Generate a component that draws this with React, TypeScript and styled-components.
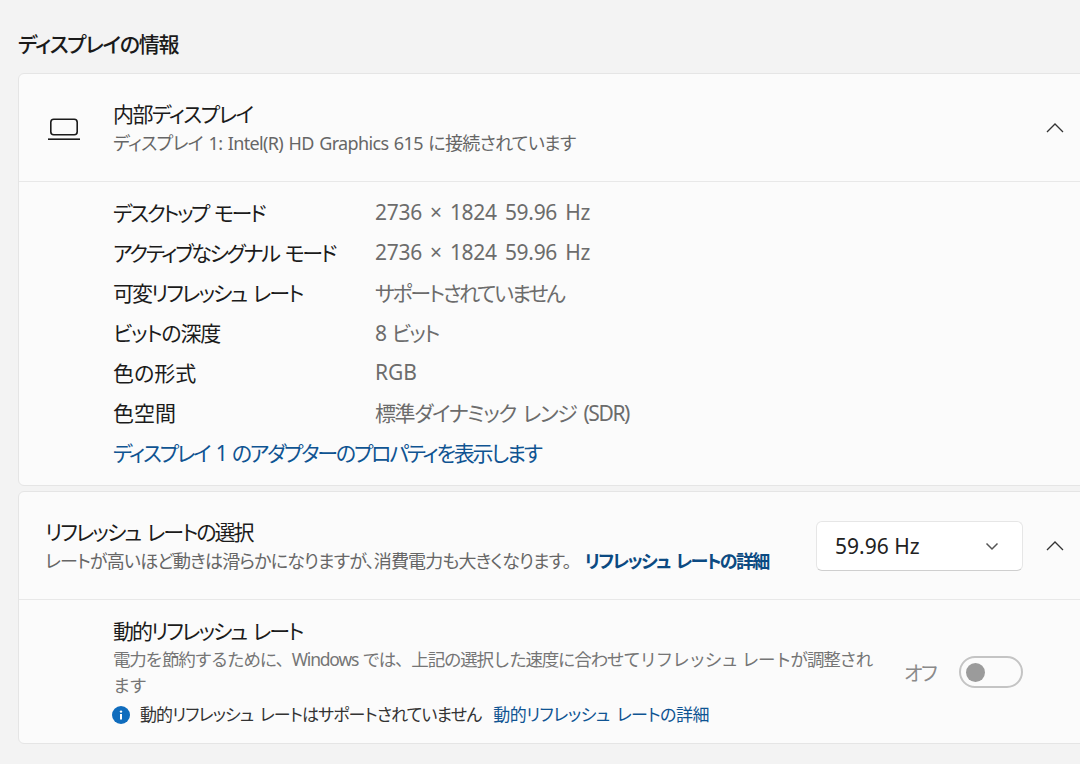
import React from "react";
import styled, { createGlobalStyle } from "styled-components";

const Global = createGlobalStyle`
  html, body { margin: 0; padding: 0; height: 764px; overflow: hidden; background: #f3f3f3; }
  body { font-family: "Noto Sans", "Noto Sans CJK JP", sans-serif; font-feature-settings: "palt"; color: #1b1b1b; word-spacing: 3px; }
`;
const Page = styled.div`
  width: 1100px; padding: 30px 0 0 18px; box-sizing: border-box;
  display: flex; flex-direction: column;
`;
const SectionTitle = styled.h2`
  margin: 0 0 15px; font-size: 21px; line-height: 28px; font-weight: 500; color: #1a1a1a;
  letter-spacing: -1.3px;
`;
const Card = styled.section<{ $gap?: number }>`
  background: #fbfbfb; border: 1px solid #e5e5e5; border-radius: 6px;
  margin-bottom: ${p => p.$gap ?? 0}px; width: 1082px; box-sizing: border-box;
`;
const Head = styled.div<{ $h: number; $pl: number }>`
  height: ${p => p.$h}px; padding-left: ${p => p.$pl}px; box-sizing: border-box;
  display: flex; align-items: center; border-bottom: 1px solid #e8e8e8;
`;
const IconSlot = styled.div`
  width: 65px; flex: none; display: flex; align-items: center; padding-top: 2px;
`;
const TitleBlock = styled.div`
  flex: 1; display: flex; flex-direction: column; min-width: 0;
`;
const Title = styled.div<{ $ls: number }>`
  font-size: 21px; line-height: 28px; color: #1b1b1b; letter-spacing: ${p => p.$ls}px; font-weight: 400;
`;
const Sub = styled.div<{ $ls: number; $ws: number }>`
  font-size: 18px; line-height: 24px; color: #666; white-space: nowrap; margin-top: 3px;
  letter-spacing: ${p => p.$ls}px; word-spacing: ${p => p.$ws}px;
`;
const Chevron = styled.div<{ $mr: number }>`
  flex: none; width: 20px; height: 20px; margin-right: ${p => p.$mr}px; display: flex; color: #333;
`;
const Rows = styled.div`
  padding: 10px 0 0 94px; display: flex; flex-direction: column; height: 303px; box-sizing: border-box;
`;
const Row = styled.div`
  height: 40px; display: grid; grid-template-columns: 262px 1fr; align-items: center;
  font-size: 21px; white-space: nowrap;
`;
const Key = styled.div<{ $ls: number }>`
  letter-spacing: ${p => p.$ls}px;
`;
const Value = styled.div<{ $ls: number }>`
  color: #6c6c6c; letter-spacing: ${p => p.$ls}px;
`;
const Link = styled.a`
  color: #0f5492; font-size: 21px; letter-spacing: -2.2px; text-decoration: none;
  line-height: 40px; margin-top: 1px; white-space: nowrap;
`;
const InlineLink = styled.a`
  color: #0b4a82; font-weight: 600; margin-left: 14px; letter-spacing: -1.7px; word-spacing: 3px;
`;
const Select = styled.div`
  width: 207px; height: 50px; flex: none; box-sizing: border-box; margin-right: 22px;
  background: #fff; border: 1px solid #e6e6e6; border-bottom-color: #cfcfcf; border-radius: 6px;
  display: flex; align-items: center; justify-content: space-between; padding: 0 22px 0 18px;
  font-size: 21px; color: #222; word-spacing: 0;
`;
const Detail = styled.div`
  padding: 17px 0 0 94px; display: flex; height: 143px; box-sizing: border-box;
`;
const DetailText = styled.div`
  width: 764px; flex: none; display: flex; flex-direction: column;
`;
const Desc = styled.div`
  font-size: 17.5px; line-height: 26px; color: #757575; letter-spacing: -1.2px; word-spacing: 1px;
  font-feature-settings: normal; width: 760px; margin-top: 1px;
`;
const Info = styled.div`
  display: flex; align-items: center; gap: 10px; font-size: 17px; line-height: 28px; color: #333;
  margin: 3px 0 0 -1px; white-space: nowrap;
`;
const InfoText = styled.span`
  letter-spacing: -0.9px;
`;
const InfoLink = styled.a`
  color: #0f5492; margin-left: 2px; letter-spacing: -0.5px;
`;
const ToggleWrap = styled.div`
  display: flex; align-items: center; gap: 23px; margin: 39px 0 0 27px; height: 32px;
  color: #8a8a8a; font-size: 20px; letter-spacing: -1.5px;
`;
const Toggle = styled.div`
  width: 64px; height: 32px; box-sizing: border-box; border: 2px solid #c4c4c4; border-radius: 16px;
  display: flex; align-items: center; padding-left: 5px;
`;
const Knob = styled.div`
  width: 19px; height: 19px; border-radius: 50%; background: #9b9b9b;
`;

const Up = () => (
  <svg width="20" height="20" viewBox="0 0 20 20" fill="none" stroke="currentColor" strokeWidth="1.3">
    <path d="M2 14 10 6l8 8" />
  </svg>
);
const Down = () => (
  <svg width="16" height="16" viewBox="0 0 16 16" fill="none" stroke="#555" strokeWidth="1.5">
    <path d="M2.5 5.5 8 11l5.5-5.5" />
  </svg>
);
const Laptop = () => (
  <svg width="32" height="24" viewBox="0 0 32 24" fill="none" stroke="#1b1b1b" strokeWidth="1.6">
    <rect x="2.8" y="2.3" width="26.4" height="15.5" rx="3" />
    <path d="M0 22.2h32" />
  </svg>
);
const InfoIcon = () => (
  <svg width="18" height="18" viewBox="0 0 18 18">
    <circle cx="9" cy="9" r="9" fill="#0f6cbd" />
    <rect x="8" y="8" width="2" height="5.5" fill="#fff" />
    <circle cx="9" cy="5.6" r="1.2" fill="#fff" />
  </svg>
);

const specs: [string, number, string, number][] = [
  ["デスクトップ モード", -2.4, "2736 × 1824 59.96 Hz", -0.3],
  ["アクティブなシグナル モード", -2.3, "2736 × 1824 59.96 Hz", -0.3],
  ["可変リフレッシュ レート", -1.95, "サポートされていません", -2.3],
  ["ビットの深度", -1.2, "8 ビット", -1.8],
  ["色の形式", 0, "RGB", 0],
  ["色空間", 0, "標準ダイナミック レンジ (SDR)", -1.4],
];

export default function App() {
  return (
    <Page>
      <Global />
      <SectionTitle>ディスプレイの情報</SectionTitle>
      <Card $gap={5}>
        <Head $h={108} $pl={29}>
          <IconSlot><Laptop /></IconSlot>
          <TitleBlock>
            <Title $ls={-1.5}>内部ディスプレイ</Title>
            <Sub $ls={-0.66} $ws={1.5}>ディスプレイ 1: Intel(R) HD Graphics 615 に接続されています</Sub>
          </TitleBlock>
          <Chevron $mr={34}><Up /></Chevron>
        </Head>
        <Rows>
          {specs.map(([k, kl, v, vl]) => (
            <Row key={k}><Key $ls={kl}>{k}</Key><Value $ls={vl}>{v}</Value></Row>
          ))}
          <Link>ディスプレイ 1 のアダプターのプロパティを表示します</Link>
        </Rows>
      </Card>
      <Card>
        <Head $h={108} $pl={26}>
          <TitleBlock>
            <Title $ls={-1.95}>リフレッシュ レートの選択</Title>
            <Sub $ls={-0.85} $ws={3}>レートが高いほど動きは滑らかになりますが、消費電力も大きくなります。<InlineLink>リフレッシュ レートの詳細</InlineLink></Sub>
          </TitleBlock>
          <Select>59.96 Hz<Down /></Select>
          <Chevron $mr={34}><Up /></Chevron>
        </Head>
        <Detail>
          <DetailText>
            <Title $ls={-1.95}>動的リフレッシュ レート</Title>
            <Desc>電力を節約するために、Windows では、上記の選択した速度に合わせてリフレッシュ レートが調整されます</Desc>
            <Info><InfoIcon /><InfoText>動的リフレッシュ レートはサポートされていません</InfoText><InfoLink>動的リフレッシュ レートの詳細</InfoLink></Info>
          </DetailText>
          <ToggleWrap>オフ<Toggle><Knob /></Toggle></ToggleWrap>
        </Detail>
      </Card>
    </Page>
  );
}
